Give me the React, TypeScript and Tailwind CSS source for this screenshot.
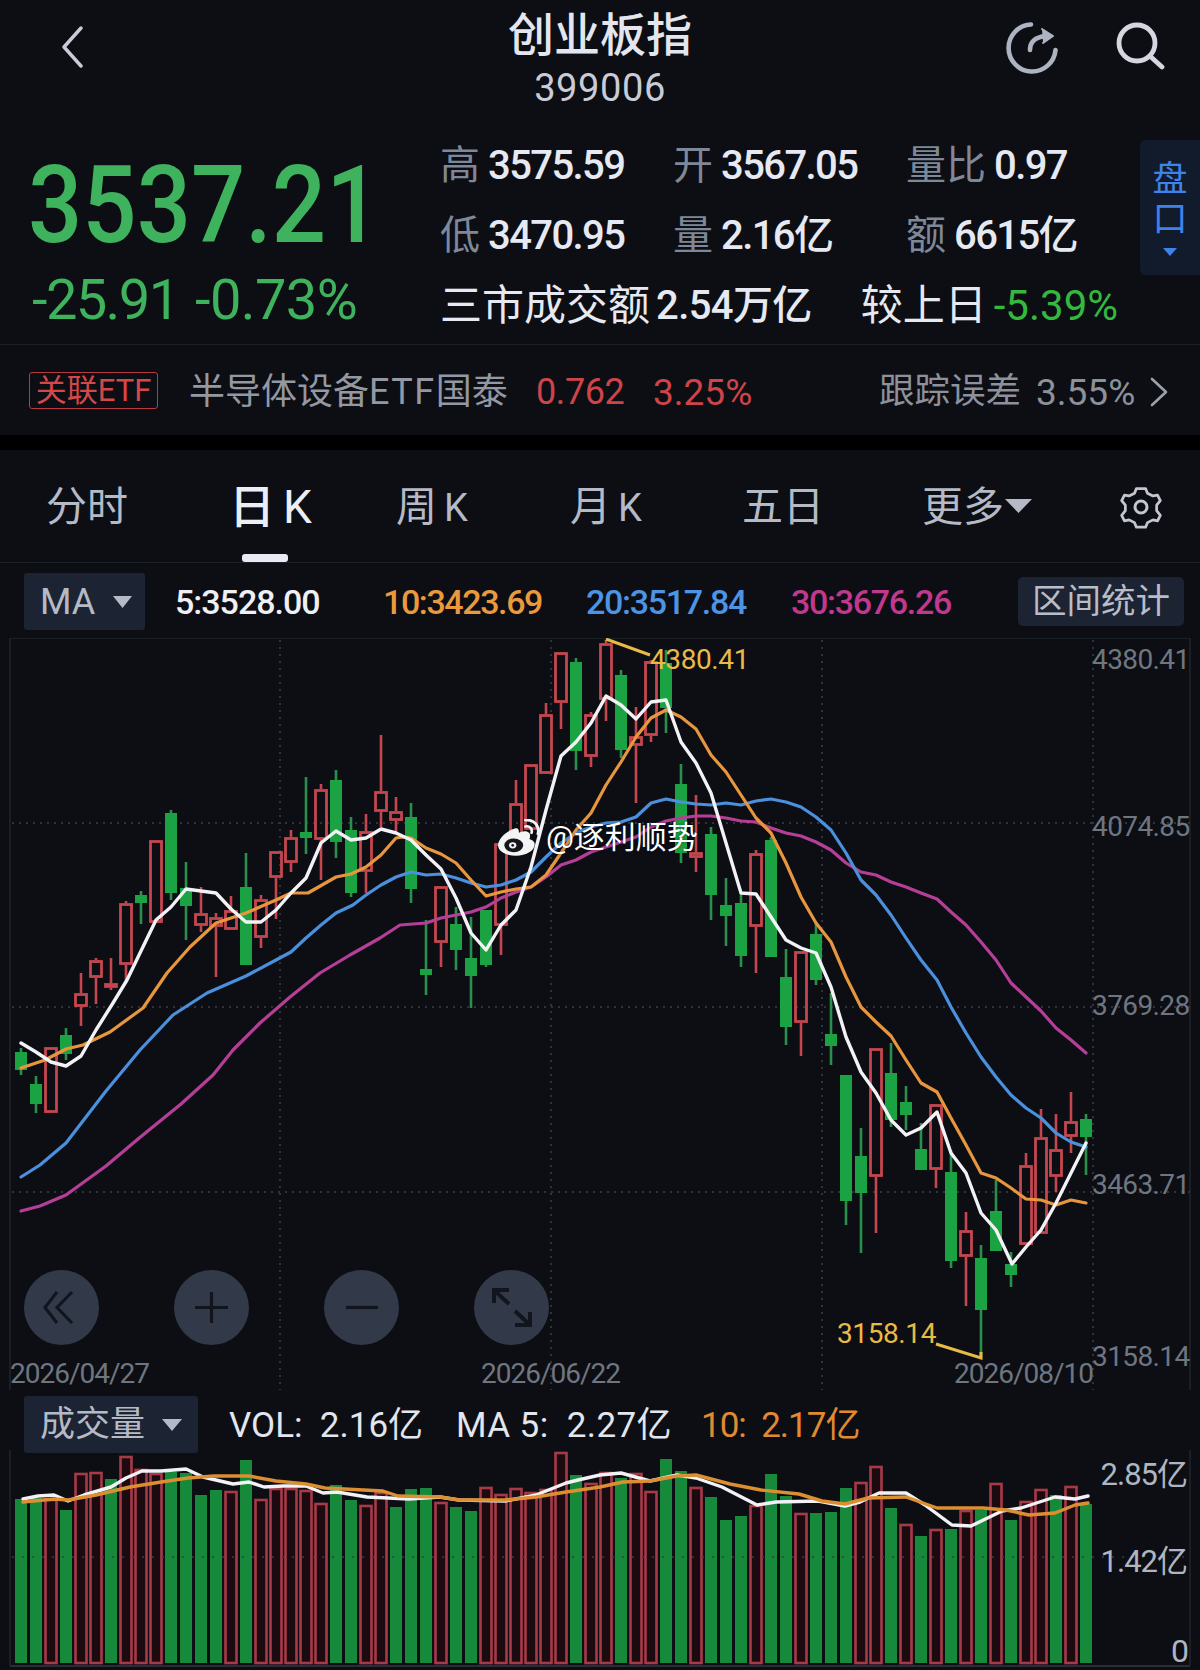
import React from 'react'

const font = { fontFamily: 'Roboto, "Noto Sans CJK SC", sans-serif' }

// high, body top, body bottom, low, r = red (hollow), g = green
const candles: [number, number, number, number, string][] = [
  [1048, 1052, 1070, 1075, 'g'], [1076, 1084, 1104, 1113, 'g'], [1047, 1047, 1113, 1113, 'r'], [1028, 1035, 1054, 1060, 'g'],
  [973, 993, 1007, 1026, 'r'], [958, 960, 978, 1004, 'r'], [958, 983, 988, 990, 'r'], [901, 903, 965, 980, 'r'],
  [891, 895, 903, 924, 'g'], [840, 840, 923, 923, 'r'], [810, 813, 893, 900, 'g'], [862, 888, 906, 940, 'g'],
  [887, 913, 926, 932, 'r'], [913, 917, 927, 977, 'r'], [896, 910, 930, 930, 'r'], [853, 887, 965, 965, 'g'],
  [895, 899, 938, 948, 'r'], [851, 851, 878, 919, 'r'], [830, 837, 863, 872, 'r'], [777, 832, 838, 854, 'g'],
  [784, 789, 840, 880, 'r'], [770, 780, 842, 858, 'g'], [817, 830, 893, 897, 'g'], [814, 831, 872, 893, 'r'],
  [735, 791, 812, 827, 'r'], [797, 811, 821, 832, 'r'], [803, 817, 889, 903, 'g'], [920, 969, 975, 995, 'g'],
  [886, 886, 943, 967, 'r'], [907, 924, 950, 970, 'g'], [917, 958, 976, 1008, 'g'], [910, 910, 965, 967, 'g'],
  [843, 843, 926, 955, 'r'], [780, 803, 845, 845, 'r'], [764, 764, 830, 830, 'r'], [703, 714, 774, 774, 'r'],
  [652, 652, 703, 729, 'r'], [658, 662, 751, 770, 'g'], [712, 714, 757, 767, 'r'], [640, 643, 700, 721, 'r'],
  [670, 675, 750, 758, 'g'], [707, 736, 746, 803, 'r'], [660, 661, 736, 742, 'r'], [650, 663, 708, 733, 'g'],
  [764, 784, 853, 863, 'g'], [795, 852, 858, 872, 'r'], [827, 834, 895, 920, 'g'], [878, 905, 916, 946, 'g'],
  [893, 903, 956, 967, 'g'], [850, 853, 927, 973, 'r'], [837, 840, 957, 957, 'g'], [949, 977, 1027, 1045, 'g'],
  [951, 951, 1023, 1056, 'r'], [923, 934, 980, 985, 'g'], [993, 1034, 1046, 1065, 'g'], [1075, 1075, 1201, 1225, 'g'],
  [1128, 1156, 1193, 1253, 'g'], [1048, 1048, 1177, 1233, 'r'], [1043, 1073, 1120, 1127, 'g'], [1086, 1102, 1115, 1130, 'g'],
  [1123, 1149, 1170, 1170, 'g'], [1104, 1104, 1170, 1188, 'r'], [1150, 1172, 1261, 1268, 'g'], [1212, 1230, 1257, 1306, 'r'],
  [1245, 1258, 1310, 1358, 'g'], [1180, 1211, 1251, 1251, 'g'], [1252, 1264, 1275, 1287, 'g'], [1153, 1165, 1245, 1245, 'r'],
  [1109, 1137, 1234, 1234, 'r'], [1114, 1149, 1177, 1192, 'r'], [1092, 1121, 1137, 1153, 'r'], [1114, 1119, 1137, 1175, 'g'],
]

const ma5 = '21,1043 36,1052 51,1062 66,1066 81,1056 96,1030 113,1003 127,980 140,953 156,920 171,907 186,889 201,891 216,893 231,909 246,922 261,922 276,910 291,893 306,878 321,843 336,831 351,840 366,838 381,829 396,833 411,840 426,855 441,869 456,898 471,933 486,950 501,925 516,910 531,867 546,810 561,756 576,742 591,723 606,696 621,705 636,719 651,702 666,700 681,742 696,763 711,793 726,843 741,893 756,894 771,917 786,940 801,948 816,953 831,987 846,1037 861,1072 876,1093 891,1120 906,1135 921,1128 937,1112 951,1153 966,1173 981,1213 996,1230 1012,1264 1026,1247 1041,1230 1056,1203 1071,1173 1086,1143'
const ma10 = '21,1068 45,1060 66,1049 83,1045 110,1032 143,1008 167,973 190,947 216,923 246,913 276,900 291,893 308,893 336,877 351,874 366,867 381,855 396,838 403,837 411,838 426,848 441,854 456,863 471,880 486,896 501,892 516,889 531,887 546,875 561,853 576,830 591,813 606,785 621,762 636,737 651,718 666,710 681,717 696,729 711,755 726,772 741,795 756,818 771,833 786,863 801,897 816,923 831,942 846,977 861,1007 876,1022 891,1036 906,1060 921,1083 937,1092 951,1118 966,1145 981,1173 996,1178 1011,1188 1026,1199 1041,1200 1056,1205 1071,1200 1086,1203'
const ma20 = '21,1177 40,1165 66,1143 106,1091 140,1050 173,1015 207,993 246,976 276,960 291,952 306,938 321,925 336,913 353,905 366,895 381,885 396,877 411,872 426,875 441,874 456,878 471,883 486,887 501,885 516,880 531,872 546,857 561,843 576,833 591,827 606,823 621,822 636,817 651,803 666,799 681,802 696,804 711,805 726,803 741,805 756,801 771,799 786,802 801,807 816,817 831,830 846,853 861,880 876,895 891,915 906,938 921,960 937,980 951,1007 966,1033 981,1057 996,1077 1011,1095 1026,1108 1041,1118 1056,1133 1071,1142 1086,1147'
const ma30 = '21,1211 40,1206 66,1195 106,1166 138,1139 181,1104 213,1075 233,1050 260,1023 290,997 320,973 350,955 380,938 400,925 426,923 441,918 456,915 471,912 486,907 501,898 516,892 531,887 546,877 561,865 576,860 591,852 606,847 621,842 636,837 651,827 666,821 681,818 696,816 711,816 726,818 741,821 756,822 771,828 786,833 801,836 816,842 831,850 846,863 861,872 876,875 891,882 906,887 921,893 937,899 951,912 966,925 981,942 996,960 1011,983 1026,997 1041,1011 1056,1028 1071,1040 1086,1053'

// top of the volume bar, r = red (hollow), g = green
const volumes: [number, string][] = [
  [1499, 'g'], [1498, 'g'], [1499, 'r'], [1510, 'g'], [1473, 'r'], [1472, 'r'], [1479, 'g'], [1456, 'r'], [1469, 'r'], [1473, 'r'],
  [1472, 'g'], [1473, 'g'], [1495, 'g'], [1490, 'g'], [1491, 'r'], [1460, 'g'], [1499, 'r'], [1488, 'r'], [1488, 'r'], [1490, 'r'],
  [1503, 'r'], [1485, 'g'], [1500, 'g'], [1505, 'r'], [1492, 'r'], [1507, 'g'], [1489, 'g'], [1488, 'g'], [1502, 'r'], [1507, 'g'],
  [1511, 'g'], [1487, 'r'], [1494, 'r'], [1488, 'r'], [1492, 'r'], [1489, 'r'], [1452, 'r'], [1475, 'g'], [1483, 'r'], [1472, 'r'],
  [1478, 'g'], [1473, 'r'], [1491, 'r'], [1459, 'g'], [1471, 'g'], [1487, 'r'], [1497, 'g'], [1520, 'g'], [1516, 'g'], [1505, 'r'],
  [1474, 'g'], [1496, 'g'], [1513, 'r'], [1513, 'g'], [1512, 'g'], [1488, 'g'], [1482, 'r'], [1466, 'r'], [1508, 'g'], [1524, 'r'],
  [1536, 'g'], [1529, 'r'], [1529, 'g'], [1510, 'r'], [1510, 'g'], [1483, 'r'], [1520, 'g'], [1501, 'r'], [1489, 'r'], [1495, 'g'],
  [1486, 'r'], [1504, 'g'],
]

const volMa5 = '23,1499 38,1496 54,1495 68,1501 84,1495 111,1487 126,1478 142,1471 161,1471 186,1469 203,1477 233,1484 249,1482 264,1487 283,1486 306,1486 323,1493 337,1492 367,1497 409,1499 440,1497 459,1500 505,1501 536,1495 566,1483 578,1480 600,1475 621,1473 650,1481 677,1475 696,1478 722,1487 757,1505 776,1502 818,1501 845,1506 860,1502 879,1493 906,1493 925,1505 952,1525 971,1526 1002,1511 1021,1508 1055,1497 1075,1499 1088,1496'
const volMa10 = '23,1502 54,1499 68,1500 96,1495 130,1487 161,1482 188,1478 214,1476 249,1476 276,1481 306,1484 325,1488 383,1491 398,1496 440,1497 459,1500 505,1500 536,1497 566,1492 600,1487 623,1482 650,1481 677,1476 696,1475 730,1484 761,1490 799,1494 822,1501 845,1504 868,1498 906,1497 937,1508 983,1508 1006,1510 1029,1515 1055,1513 1075,1505 1088,1503'

function Stat({ label, value, className }: { label: string; value: string; className: string }) {
  return (
    <div className={`flex items-center gap-[8px] ${className}`}>
      <span className="text-[40px] leading-none text-[#7f8898]">{label}</span>
      <span className="text-[40px] leading-none font-medium tracking-[-1.6px] text-[#e6e9f2]">{value}</span>
    </div>
  )
}

function Triangle({ className }: { className: string }) {
  return (
    <svg viewBox="0 0 20 12" preserveAspectRatio="none" className={className}>
      <polygon points="0,0 20,0 10,12" fill="currentColor" />
    </svg>
  )
}

function CircleButton({ className, children }: { className: string; children: React.ReactNode }) {
  return (
    <div className={`absolute top-[632px] w-[75px] h-[75px] rounded-full bg-[#323a4a] ${className}`}>
      <svg viewBox="0 0 75 75" className="w-full h-full" fill="none" stroke="#12151d" strokeWidth="3.2">
        {children}
      </svg>
    </div>
  )
}

function KChart() {
  return (
    <svg viewBox="0 638 1200 758" className="absolute inset-0 w-[1200px] h-[758px]" fill="none">
      <line x1="10" y1="638" x2="1190" y2="638" stroke="#1b1e25" strokeWidth="2" />
      <line x1="10" y1="638" x2="10" y2="1390" stroke="#1b1e25" strokeWidth="2" />
      <line x1="1190" y1="638" x2="1190" y2="1390" stroke="#1b1e25" strokeWidth="2" />
      {[823, 1007, 1192].map((y) => (
        <line key={y} x1="12" y1={y} x2="1190" y2={y} stroke="#30333a" strokeWidth="2" strokeDasharray="2 5" />
      ))}
      {[280, 551, 822, 1093].map((x) => (
        <line key={x} x1={x} y1="640" x2={x} y2="1390" stroke="#30333a" strokeWidth="2" strokeDasharray="2 5" />
      ))}
      {candles.map(([high, top, bottom, low, kind], i) => {
        const x = 21 + i * 15
        if (kind === 'g') {
          return (
            <g key={i}>
              <line x1={x} y1={high} x2={x} y2={low} stroke="#2a8f4a" strokeWidth="2.6" />
              <rect x={x - 6} y={top} width="12" height={bottom - top} fill="#1ba343" />
            </g>
          )
        }
        return (
          <g key={i} stroke="#c5464f">
            <line x1={x} y1={high} x2={x} y2={top} strokeWidth="2.6" />
            <line x1={x} y1={bottom} x2={x} y2={low} strokeWidth="2.6" />
            <rect x={x - 5.5} y={top + 1.5} width="11" height={bottom - top - 3} strokeWidth="2.8" />
          </g>
        )
      })}
      <g strokeWidth="3.2" strokeLinejoin="round" strokeLinecap="round">
        <polyline points={ma30} stroke="#b53f97" />
        <polyline points={ma20} stroke="#4a90dc" />
        <polyline points={ma10} stroke="#e8963e" />
        <polyline points={ma5} stroke="#f2f2f6" strokeWidth="3.4" />
      </g>
      <polyline points="606,639 650,655" stroke="#e9bb45" strokeWidth="3" />
      <polyline points="936,1344 981,1358 981,1352" stroke="#e9bb45" strokeWidth="3" />
    </svg>
  )
}

function VolChart() {
  return (
    <svg viewBox="0 1450 1200 220" className="absolute inset-0 w-[1200px] h-[220px]" fill="none">
      <line x1="10" y1="1450" x2="10" y2="1666" stroke="#1b1e25" strokeWidth="2" />
      <line x1="1190" y1="1450" x2="1190" y2="1666" stroke="#1b1e25" strokeWidth="2" />
      <line x1="10" y1="1666" x2="1190" y2="1666" stroke="#2a2d34" strokeWidth="2" />
      {volumes.map(([top, kind], i) => {
        const x = 21 + i * 15
        if (kind === 'g') {
          return <rect key={i} x={x - 6} y={top} width="12" height={1663 - top} fill="#168a3a" />
        }
        return <rect key={i} x={x - 5.5} y={top + 1} width="11" height={1662 - top} fill="#1b0a10" stroke="#a83a48" strokeWidth="2.6" />
      })}
      <line x1="12" y1="1557" x2="1190" y2="1557" stroke="#3b3e46" strokeWidth="1.5" strokeDasharray="2 8" />
      <g strokeWidth="3.4" strokeLinejoin="round" strokeLinecap="round">
        <polyline points={volMa5} stroke="#f2f2f6" />
        <polyline points={volMa10} stroke="#dc8f30" />
      </g>
    </svg>
  )
}

function Weibo() {
  return (
    <svg viewBox="0 0 42 36" className="w-[44px] h-[38px]" fill="none">
      <path d="M17 9C9 11 1 19 1 25c0 6 8 10 17 10 10 0 18-5 18-11 0-3-3-4-5-5 1-3 1-6-2-7-3-1-6 0-8 1 0-3-1-5-4-4Z" fill="#f4f4f4" />
      <ellipse cx="16" cy="25" rx="9" ry="6.5" fill="#14161c" />
      <ellipse cx="15" cy="25" rx="3.5" ry="3" fill="#f4f4f4" />
      <circle cx="15" cy="25" r="1.3" fill="#14161c" />
      <path d="M27 7c4-1 7 2 6 6M27 1c8-1 14 5 12 13" stroke="#f4f4f4" strokeWidth="2.6" strokeLinecap="round" />
    </svg>
  )
}

const tabs = [
  { cjk: '分时', k: '', w: 'w-[183px]' },
  { cjk: '周', k: 'K', w: 'w-[174px]' },
  { cjk: '月', k: 'K', w: 'w-[172px]' },
  { cjk: '五日', k: '', w: 'w-[180px]' },
]

export default function App() {
  return (
    <div className="relative w-[1200px] h-[1670px] overflow-hidden bg-[#0c0e14] text-[#e6e9f2]" style={font}>
      {/* title */}
      <header className="grid grid-cols-[1fr_auto_1fr] h-[130px]">
        <div className="pl-[60px] pt-[26px]">
          <svg viewBox="0 0 24 42" className="w-[24px] h-[42px]" fill="none" stroke="#c9ccd6" strokeWidth="3.4" strokeLinecap="round" strokeLinejoin="round">
            <polyline points="21,2 4,21 21,40" />
          </svg>
        </div>
        <div className="flex flex-col items-center pt-[13px]">
          <div className="text-[46px] leading-[44px] font-medium text-[#e3e6ee]">创业板指</div>
          <div className="mt-[12px] text-[38px] leading-[38px] tracking-[0.6px] text-[#c9ccd6]">399006</div>
        </div>
        <div className="flex justify-end items-start gap-[56px] pr-[34px] pt-[20px]">
          <svg viewBox="0 0 56 56" className="w-[56px] h-[56px]" fill="none" stroke="#aeb3c2" strokeWidth="4.6" strokeLinecap="round" strokeLinejoin="round">
            <path d="M27 4.5A23.5 23.5 0 1 0 51.5 30" />
            <path d="M26 30c0-8 5-13 16-14" />
            <path d="M38 9l11 7-10 7" fill="#aeb3c2" strokeWidth="2" />
          </svg>
          <svg viewBox="0 0 50 48" className="w-[50px] h-[48px] mt-[2px]" fill="none" stroke="#d4d7df" strokeWidth="4.8" strokeLinecap="round">
            <circle cx="21" cy="21" r="18" />
            <line x1="35" y1="35" x2="46" y2="45" />
          </svg>
        </div>
      </header>

      {/* quote */}
      <section className="relative flex h-[214px]">
        <div className="w-[440px] pl-[28px] flex flex-col text-[#3fb25d]">
          <div className="mt-[25px] h-[100px] text-[108px] leading-[100px] font-medium origin-left scale-x-[0.885] whitespace-nowrap">3537.21</div>
          <div className="mt-[15px] ml-[4px] flex text-[56px] leading-[60px]">
            <span className="w-[163px] tracking-[-1.6px]">-25.91</span>
            <span className="tracking-[-0.6px]">-0.73%</span>
          </div>
        </div>
        <div className="flex-1 flex flex-col pt-px">
          <div className="flex h-[70px]">
            <Stat label="高" value="3575.59" className="w-[233px]" />
            <Stat label="开" value="3567.05" className="w-[233px]" />
            <Stat label="量比" value="0.97" className="" />
          </div>
          <div className="flex h-[70px]">
            <Stat label="低" value="3470.95" className="w-[233px]" />
            <Stat label="量" value="2.16亿" className="w-[233px]" />
            <Stat label="额" value="6615亿" className="" />
          </div>
          <div className="flex h-[70px] items-center whitespace-nowrap">
            <span className="text-[42px] leading-none">三市成交额</span>
            <span className="ml-[6px] text-[40px] leading-none font-medium tracking-[-0.6px]">2.54万亿</span>
            <span className="ml-[49px] text-[42px] leading-none">较上日</span>
            <span className="ml-[7px] text-[42px] leading-none text-[#34b83f]">-5.39%</span>
          </div>
        </div>
        <div className="absolute right-0 top-[10px] w-[60px] h-[135px] rounded-l-[6px] bg-[#121b2c] flex flex-col items-center pt-[21px] text-[#3f83ea]">
          <span className="text-[35px] leading-[38px]">盘</span>
          <span className="mt-[2px] text-[35px] leading-[38px]">口</span>
          <Triangle className="mt-[9px] w-[14px] h-[8px]" />
        </div>
      </section>

      {/* linked etf */}
      <section className="flex items-center h-[91px] border-t border-[#1d2027] pl-[29px]">
        <div className="flex items-center justify-center w-[129px] h-[37px] border border-[#b83a3f] rounded-[3px] text-[#d5484a] text-[31px] leading-none whitespace-nowrap">
          关联ETF
        </div>
        <span className="ml-[31px] mt-[4px] w-[347px] text-[36px] leading-none text-[#9398a2] whitespace-nowrap">
          半导体设备<span className="tracking-[1.5px]">ETF</span>国泰
        </span>
        <span className="w-[117px] mt-[4px] text-[36px] leading-none tracking-[-0.4px] text-[#cf4448]">0.762</span>
        <span className="w-[226px] mt-[4px] text-[37px] leading-none text-[#cf4448]">3.25%</span>
        <span className="mt-[4px] text-[35.5px] leading-none text-[#8d919b] whitespace-nowrap">跟踪误差</span>
        <span className="ml-[15px] mt-[4px] text-[37px] leading-none text-[#8d919b]">3.55%</span>
        <svg viewBox="0 0 20 30" className="ml-[14px] mt-[4px] w-[20px] h-[30px]" fill="none" stroke="#9ca0aa" strokeWidth="2.6" strokeLinecap="round" strokeLinejoin="round">
          <polyline points="3,2 17,15 3,28" />
        </svg>
      </section>
      <div className="h-[15px] bg-black" />

      {/* period tabs */}
      <nav className="flex items-start h-[113px] border-b border-[#1d2027] pl-[46px] pt-[35px] text-[#b6bac6]">
        <div className={`text-[41px] leading-[44px] ${tabs[0].w}`}>{tabs[0].cjk}</div>
        <div className="relative w-[167px] flex items-center text-[46px] leading-[44px] text-[#eceef6]">
          <span className="font-medium">日</span>
          <span className="ml-[8px]">K</span>
          <div className="absolute left-[13px] top-[69px] w-[46px] h-[8px] rounded-[3px] bg-[#e7e9f5]" />
        </div>
        {tabs.slice(1).map((t) => (
          <div key={t.cjk} className={`text-[41px] leading-[44px] ${t.w}`}>
            {t.cjk}
            {t.k && <span className="ml-[7px] text-[38px]">{t.k}</span>}
          </div>
        ))}
        <div className="flex items-center w-[197px] text-[41px] leading-[44px]">
          更多
          <Triangle className="ml-[1px] w-[27px] h-[14px] -mt-[2px]" />
        </div>
        <svg viewBox="0 0 44 44" className="w-[44px] h-[44px]" fill="none" stroke="#c2c6d0" strokeWidth="3" strokeLinejoin="round">
          <path d="M17 3h10l2 5 6 3 5-1 3 6-4 5v6l4 5-3 6-5-1-6 3-2 5H17l-2-5-6-3-5 1-3-6 4-5v-6l-4-5 3-6 5 1 6-3Z" transform="translate(22 22) scale(0.92 0.92) translate(-22 -23)" />
          <circle cx="22" cy="22" r="6" />
        </svg>
      </nav>

      {/* ma legend */}
      <div className="flex items-center h-[75px] pl-[24px] pt-[2px]">
        <div className="flex items-center w-[121px] h-[57px] rounded-[3px] bg-[#1c2433] pl-[16px] text-[#b6bac6]">
          <span className="text-[36px] leading-none">MA</span>
          <Triangle className="ml-[18px] w-[19px] h-[12px]" />
        </div>
        <span className="ml-[30px] w-[208px] text-[34px] leading-none font-medium tracking-[-1px] text-[#eef0f6]">5:3528.00</span>
        <span className="w-[203px] text-[34px] leading-none font-medium tracking-[-1.4px] text-[#ea9a3c]">10:3423.69</span>
        <span className="w-[205px] text-[34px] leading-none font-medium tracking-[-1.3px] text-[#4d94e4]">20:3517.84</span>
        <span className="w-[227px] text-[34px] leading-none font-medium tracking-[-1.3px] text-[#c0398e]">30:3676.26</span>
        <div className="flex items-center justify-center w-[166px] h-[49px] rounded-[5px] bg-[#1c2433] text-[34.5px] leading-none text-[#b8bdc8]">
          区间统计
        </div>
      </div>

      {/* k line chart */}
      <div className="relative h-[758px]">
        <KChart />
        <div className="absolute left-[650px] top-[8px] text-[28px] leading-[28px] tracking-[-0.4px] text-[#e9bb45]">4380.41</div>
        <div className="absolute left-[837px] top-[682px] text-[28px] leading-[28px] tracking-[-0.4px] text-[#e9bb45]">3158.14</div>
        <div className="absolute left-[1092px] top-[8px] text-[28px] leading-[28px] tracking-[-0.6px] text-[#6f7680]">4380.41</div>
        <div className="absolute left-[1092px] top-[175px] text-[28px] leading-[28px] tracking-[-0.6px] text-[#6f7680]">4074.85</div>
        <div className="absolute left-[1092px] top-[354px] text-[28px] leading-[28px] tracking-[-0.6px] text-[#6f7680]">3769.28</div>
        <div className="absolute left-[1092px] top-[533px] text-[28px] leading-[28px] tracking-[-0.6px] text-[#6f7680]">3463.71</div>
        <div className="absolute left-[1092px] top-[705px] text-[28px] leading-[28px] tracking-[-0.6px] text-[#6f7680]">3158.14</div>
        <div className="absolute left-[10px] top-[722px] text-[28px] leading-[28px] tracking-[-1px] text-[#6f7680]">2026/04/27</div>
        <div className="absolute left-[481px] top-[722px] text-[28px] leading-[28px] tracking-[-1px] text-[#6f7680]">2026/06/22</div>
        <div className="absolute left-[954px] top-[722px] text-[28px] leading-[28px] tracking-[-1px] text-[#6f7680]">2026/08/10</div>
        <CircleButton className="left-[24px]">
          <path d="M33 22 L21 37.5 L33 53 M48 22 L33 37.5 L48 53" />
        </CircleButton>
        <CircleButton className="left-[174px]">
          <path d="M21 37.5 H54 M37.5 22 V53" />
        </CircleButton>
        <CircleButton className="left-[324px]">
          <path d="M22 37.5 H54" />
        </CircleButton>
        <CircleButton className="left-[474px]">
          <g strokeWidth="4">
            <path d="M20 33 V20 H35 M20 20 L35 34" />
            <path d="M56 42 V55 H41 M56 55 L41 41" />
          </g>
        </CircleButton>
        <div className="absolute left-[497px] top-[181px] flex items-center gap-[5px] text-white text-[31px] leading-[36px] [text-shadow:0_0_3px_rgba(0,0,0,0.5)]">
          <Weibo />
          <span>@逐利顺势</span>
        </div>
      </div>

      {/* volume legend */}
      <div className="flex items-center h-[57px] pl-[24px]">
        <div className="flex items-center w-[174px] h-[57px] rounded-[3px] bg-[#1c2433] pl-[16px] text-[#b6bac6]">
          <span className="text-[35px] leading-none">成交量</span>
          <Triangle className="ml-[17px] w-[20px] h-[12px]" />
        </div>
        <span className="ml-[31px] mt-[2px] w-[227px] text-[35px] leading-none text-[#e3e6ee] whitespace-pre">VOL:  2.16亿</span>
        <span className="w-[245px] mt-[2px] text-[35px] leading-none tracking-[0.4px] text-[#e3e6ee] whitespace-pre">MA 5:  2.27亿</span>
        <span className="mt-[2px] text-[35px] leading-none tracking-[-1px] text-[#e08a32] whitespace-pre">10:  2.17亿</span>
      </div>

      {/* volume chart */}
      <div className="relative h-[220px] -mt-[3px]">
        <VolChart />
        <div className="absolute right-[13px] top-[8px] text-[31px] leading-[34px] tracking-[-1px] text-[#b0b5c0]">2.85亿</div>
        <div className="absolute right-[13px] top-[95px] text-[31px] leading-[34px] tracking-[-1px] text-[#b0b5c0]">1.42亿</div>
        <div className="absolute right-[11px] top-[184px] text-[32px] leading-[34px] text-[#b0b5c0]">0</div>
      </div>
    </div>
  )
}
